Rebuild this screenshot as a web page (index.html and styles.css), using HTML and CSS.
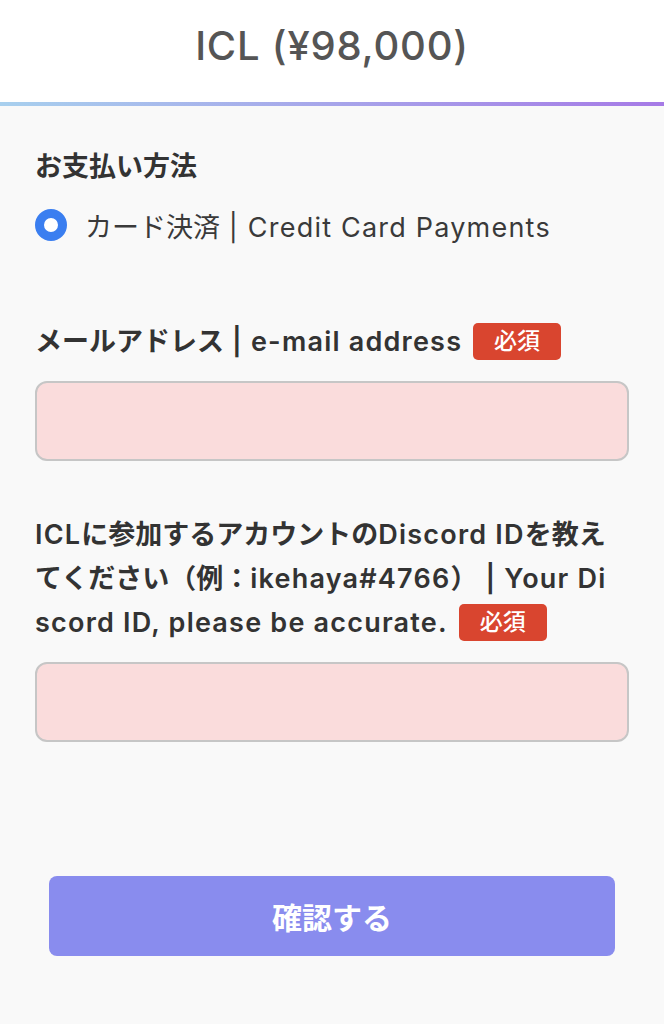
FILE: index.html
```html
<!DOCTYPE html>
<html lang="ja">
<head>
  <meta charset="UTF-8" />
  <meta name="viewport" content="width=device-width, initial-scale=1.0" />
  <title>ICL (¥98,000)</title>
  <link rel="stylesheet" href="styles.css">
</head>
<body>
  <header class="header">
    <h1 class="header-title">ICL (¥98,000)</h1>
  </header>

  <main class="form">
    <section class="payment">
      <h2 class="label">お支払い方法</h2>
      <label class="radio-row">
        <span class="radio"></span>
        <span class="radio-text">カード決済<span class="en"> | Credit Card Payments</span></span>
      </label>
    </section>

    <section class="field field-email">
      <p class="label">メールアドレス<span class="en"> | e-mail address</span> <span class="badge">必須</span></p>
      <div class="input"></div>
    </section>

    <section class="field field-discord">
      <p class="label"><span class="en">ICL</span>に参加するアカウントの<span class="en">Discord ID</span>を教えてください（例：<span class="en">ikehaya#4766</span>）<span class="en"> | Your Discord ID, please be accurate.</span> <span class="badge">必須</span></p>
      <div class="input"></div>
    </section>

    <div class="actions">
      <button class="submit" type="button">確認する</button>
    </div>
  </main>
</body>
</html>
```

FILE: styles.css
```css
html, body {
  margin: 0;
  padding: 0;
  background: #f9f9f9;
  color: #333;
  font-family: Inter, "Noto Sans CJK JP", sans-serif;
}

*,
*::before,
*::after {
  box-sizing: border-box;
}

.header {
  height: 106px;
  background: white;
  border-bottom: 4px solid transparent;
  border-image: linear-gradient(to right, #a8d0ee, #a67ae6) 1;
  display: flex;
  justify-content: center;
  align-items: center;
}

.header-title {
  margin: 0 0 12px;
  font-size: 40px;
  font-weight: 500;
  letter-spacing: 0.02em;
  color: #555;
}

.form {
  padding: 39px 35px 60px;
}

.label {
  margin: 0;
  padding-right: 10px;
  font-size: 27px;
  line-height: 44px;
  font-weight: 600;
  color: #333;
  word-break: break-all;
}

.en {
  letter-spacing: 0.045em;
}

.radio-row {
  margin-top: 14px;
  display: flex;
  align-items: center;
  gap: 18px;
  height: 44px;
}

.radio {
  width: 32px;
  height: 32px;
  border-radius: 50%;
  border: 9.5px solid #3a7ef0;
  background: white;
  flex-shrink: 0;
}

.radio-text {
  font-size: 27px;
  color: #3a3a3a;
}

.field-email {
  margin-top: 73px;
}

.field-discord {
  margin-top: 52px;
}

.badge {
  display: inline-block;
  vertical-align: middle;
  margin-top: -4px;
  margin-left: 4px;
  height: 37px;
  line-height: 37px;
  padding: 0 21px;
  border-radius: 5px;
  background: #d9452f;
  color: white;
  font-size: 23px;
  font-weight: 500;
  letter-spacing: 0;
}

.input {
  margin-top: 17px;
  height: 80px;
  background: #fadcdc;
  border: 2px solid #c6c6c6;
  border-radius: 12px;
}

.actions {
  margin-top: 134px;
  padding: 0 14px;
}

.submit {
  display: block;
  width: 100%;
  height: 80px;
  border: none;
  border-radius: 8px;
  background: #898cee;
  color: white;
  font-family: inherit;
  font-size: 30px;
  font-weight: 600;
}
```
